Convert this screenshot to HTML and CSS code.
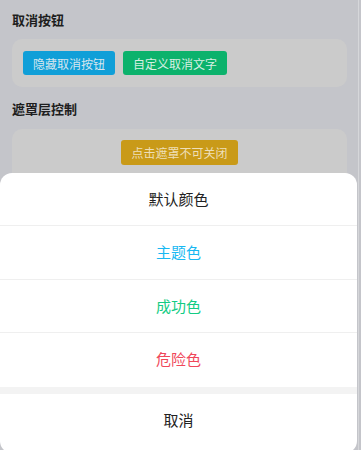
FILE: index.html
```html
<!DOCTYPE html>
<html lang="zh-CN">
<head>
  <meta charset="UTF-8" />
  <meta name="viewport" content="width=device-width, initial-scale=1.0"/>
  <title>ActionSheet 操作菜单</title>
  <link rel="stylesheet" href="styles.css">
</head>
<body>

  <div class="screen">
    <div class="page">
      <div class="section-title first">取消按钮</div>
      <div class="card">
        <button class="btn btn-blue">隐藏取消按钮</button>
        <button class="btn btn-green">自定义取消文字</button>
      </div>

      <div class="section-title">遮罩层控制</div>
      <div class="card center">
        <button class="btn btn-yellow">点击遮罩不可关闭</button>
      </div>
    </div>

    <div class="scrollbar"></div>

    <div class="sheet">
      <div class="sheet-item">默认颜色</div>
      <div class="sheet-item primary">主题色</div>
      <div class="sheet-item success">成功色</div>
      <div class="sheet-item danger">危险色</div>
      <div class="sheet-gap"></div>
      <div class="sheet-item cancel">取消</div>
    </div>
  </div>

</body>
</html>
```

FILE: styles.css
```css
* {
  box-sizing: border-box;
}

body {
  margin: 0;
  background: #c4c5ca;
  font-family: "Noto Sans CJK SC", "Noto Sans", sans-serif;
}

.screen {
  position: relative;
  width: 361px;
  height: 450px;
  overflow: hidden;
}

.page {
  width: 357px;
  padding: 0 10px 0 12px;
}

.section-title {
  margin: 12px 0 10px;
  font-size: 13px;
  line-height: 20px;
  font-weight: bold;
  color: #1e1e20;
}

.section-title.first {
  margin-top: 10px;
  margin-bottom: 9px;
}

.card {
  display: flex;
  gap: 8px;
  background: #cbcbcb;
  border-radius: 10px;
  padding: 12px 11px;
  height: 48px;
}

.card.center {
  justify-content: center;
  padding-top: 11px;
  height: 60px;
}

.btn {
  height: 24px;
  padding: 0 10px;
  border: none;
  border-radius: 3px;
  font-family: inherit;
  font-size: 12px;
  color: #d6e6ee;
}

.btn-blue {
  background: #109fd8;
}

.btn-green {
  background: #0cb26c;
  color: #d8efe3;
}

.btn-yellow {
  height: 25px;
  background: #c99a18;
  color: #eedfb8;
}

.scrollbar {
  position: absolute;
  top: 0;
  right: 2px;
  width: 1px;
  height: 450px;
  background: #d6d7da;
}

.sheet {
  position: absolute;
  top: 173px;
  left: 0;
  width: 357px;
  height: 280px;
  background: #fff;
  border-radius: 12px;
  overflow: hidden;
}

.sheet-item {
  height: 53.4px;
  line-height: 52px;
  text-align: center;
  font-size: 15px;
  color: #222;
  border-bottom: 1px solid #efefef;
}

.sheet-item.primary {
  color: #18b8f2;
}

.sheet-item.success {
  color: #14cc84;
}

.sheet-item.danger {
  color: #f0475a;
  border-bottom: none;
}

.sheet-gap {
  height: 7px;
  background: #f3f3f3;
}

.sheet-item.cancel {
  border-bottom: none;
}
```
